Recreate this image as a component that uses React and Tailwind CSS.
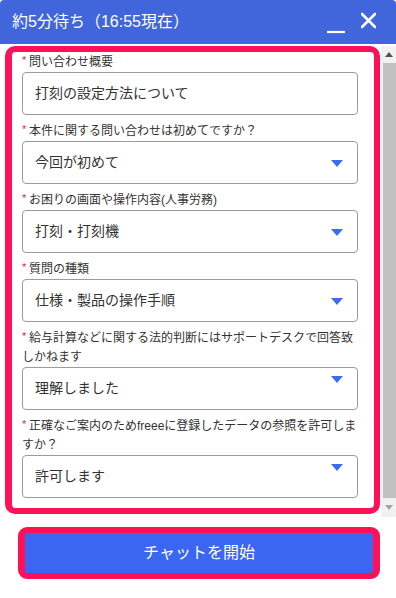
import React from 'react';

const fields = [
    { label: '問い合わせ概要', value: '打刻の設定方法について', select: false },
    { label: '本件に関する問い合わせは初めてですか？', value: '今回が初めて', select: true },
    { label: 'お困りの画面や操作内容(人事労務)', value: '打刻・打刻機', select: true },
    { label: '質問の種類', value: '仕様・製品の操作手順', select: true },
    { label: '給与計算などに関する法的判断にはサポートデスクで回答致しかねます', value: '理解しました', select: true, top: true },
    { label: '正確なご案内のためfreeeに登録したデータの参照を許可しますか？', value: '許可します', select: true, top: true },
];

const Caret = ({ top }) => (
    <svg
        width="12"
        height="7"
        viewBox="0 0 12 7"
        className={`absolute right-[14px] ${top ? 'top-[8px]' : 'top-[18px]'}`}
    >
        <path d="M0 0h12L6 7z" fill="#3c6cf0" />
    </svg>
);

const Field = ({ label, value, select, top }) => (
    <div className="flex flex-col">
        <p className="text-[12px] leading-[19px] text-[#333]">
            <span className="inline-block w-[7px] text-[11px] leading-none align-[2px] text-[#e8195a]">*</span>
            {label}
        </p>
        <div className="relative h-[43px] rounded-[4px] border border-[#9c9c9c] bg-white flex items-center pl-[12px] text-[14px] text-[#333]">
            {value}
            {select && <Caret top={top} />}
        </div>
    </div>
);

const App = () => {
    return (
        <div className="w-[396px] h-[598px] bg-white flex flex-col font-['Liberation_Sans','Noto_Sans_CJK_JP',sans-serif]">
            <div className="h-[44px] shrink-0 bg-[#4166dc] rounded-t-[4px] flex items-center justify-between pl-[12px] pr-[20px]">
                <span className="text-white text-[16px] leading-none">約5分待ち（16:55現在）</span>
                <div className="flex items-center gap-[16px] pt-[4px]">
                    <svg width="18" height="22" viewBox="0 0 18 22">
                        <path d="M0 19h18" stroke="#fff" strokeWidth="2.2" />
                    </svg>
                    <svg width="15" height="22" viewBox="0 0 15 22" className="-mt-[7px]">
                        <path d="M1 4l13 13M14 4L1 17" stroke="#fff" strokeWidth="2.6" strokeLinecap="round" />
                    </svg>
                </div>
            </div>

            <div className="flex h-[471px] mt-[2px] shrink-0">
                <div className="flex-1 pl-[5px] pr-[1px]">
                    <div className="rounded-[10px] border-[6px] border-l-[7px] border-[#ff1158] pl-[10px] pr-[16px] pt-[1px] pb-[10px] flex flex-col gap-[7px]">
                        {fields.map((f) => (
                            <Field key={f.label} {...f} />
                        ))}
                    </div>
                </div>
                <div className="w-[15px] bg-[#f1f1f1] flex flex-col">
                    <div className="h-[17px] flex items-center justify-center">
                        <svg width="8" height="5" viewBox="0 0 8 5"><path d="M0 5h8L4 0z" fill="#505050" /></svg>
                    </div>
                    <div className="flex-1 ml-[2px] bg-[#c1c1c1]" />
                    <div className="h-[19px] flex items-center justify-center">
                        <svg width="8" height="5" viewBox="0 0 8 5"><path d="M0 0h8L4 5z" fill="#a3a3a3" /></svg>
                    </div>
                </div>
            </div>

            <div className="pt-[10px] pl-[18px] pr-[16px]">
                <button className="w-full h-[52px] rounded-[9px] border-x-[7px] border-y-[6px] border-[#ff1158] bg-[#3b66f2] text-white text-[16px] flex items-center justify-center">
                    チャットを開始
                </button>
            </div>
        </div>
    );
};

export default App;
